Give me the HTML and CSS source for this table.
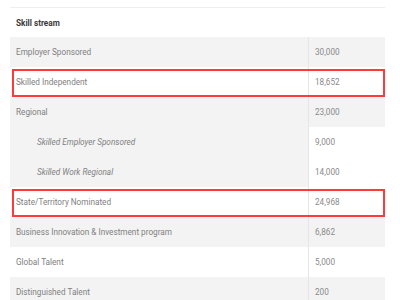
FILE: index.html
```html
<!DOCTYPE html>
<html>
<head>
<meta charset="utf-8">
<link rel="stylesheet" href="styles.css">
</head>
<body>
<div class="table">
  <div class="head">Skill stream</div>
  <div class="row gray"><div class="name">Employer Sponsored</div><div class="val">30,000</div></div>
  <div class="row mark"><div class="name">Skilled Independent</div><div class="val">18,652</div></div>
  <div class="row gray"><div class="name">Regional</div><div class="val">23,000</div></div>
  <div class="row sub"><div class="name">Skilled Employer Sponsored</div><div class="val">9,000</div></div>
  <div class="row sub"><div class="name">Skilled Work Regional</div><div class="val">14,000</div></div>
  <div class="row mark"><div class="name">State/Territory Nominated</div><div class="val">24,968</div></div>
  <div class="row gray"><div class="name">Business Innovation &amp; Investment program</div><div class="val">6,862</div></div>
  <div class="row"><div class="name">Global Talent</div><div class="val">5,000</div></div>
  <div class="row gray"><div class="name">Distinguished Talent</div><div class="val">200</div></div>
</div>
</body>
</html>
```
FILE: styles.css
```css
html, body {
  margin: 0;
  background: #fff;
}
body {
  font-family: Roboto, "Liberation Sans", sans-serif;
  font-size: 8.2px;
  color: #808080;
  overflow: hidden;
}
.table {
  margin: 7px 0 0 10px;
  width: 375px;
  border-top: 1px solid #eeeeee;
}
.head {
  height: 29px;
  line-height: 30px;
  padding-left: 6px;
  font-weight: bold;
  color: #3a3a3a;
}
.row {
  position: relative;
  display: grid;
  grid-template-columns: 298px 77px;
  height: 30px;
}
.name,
.val {
  padding-top: 1px;
  line-height: 29px;
}
.name {
  padding-left: 6px;
}
.val {
  border-left: 1px solid #e6e6e6;
  padding-left: 6px;
  color: #8a8a8a;
}
.gray {
  background: #f3f3f3;
}
.sub .name {
  background: #f3f3f3;
  padding-left: 27px;
  font-style: italic;
}
.mark::after {
  content: "";
  position: absolute;
  top: 2px;
  left: 2px;
  right: 0;
  bottom: 0;
  border: 2px solid #ff3a3a;
}
```
